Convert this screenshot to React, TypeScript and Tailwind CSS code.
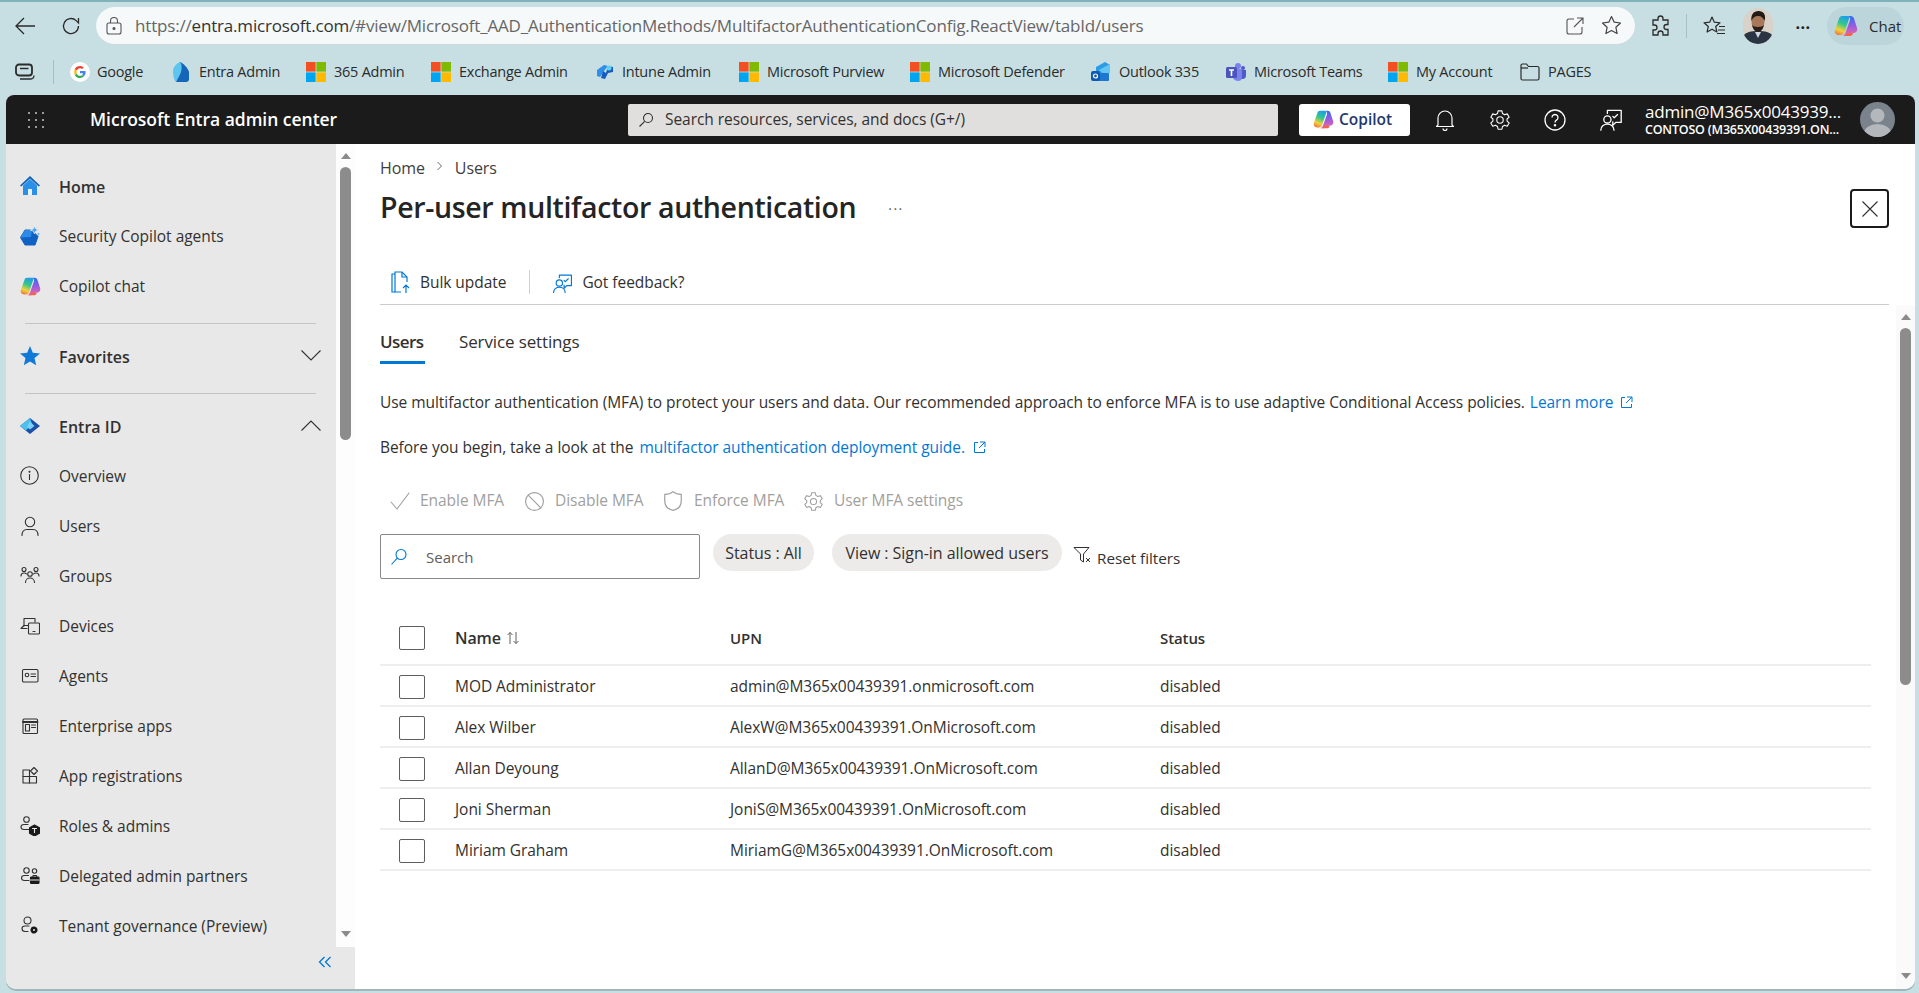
import React from "react";

const S = ({ size = 20, className = "", children, sw = 1.1 }: { size?: number; className?: string; children: React.ReactNode; sw?: number }) => (
  <svg width={size} height={size} viewBox="0 0 20 20" fill="none" stroke="currentColor" strokeWidth={sw} strokeLinecap="round" strokeLinejoin="round" className={"shrink-0 " + className}>
    {children}
  </svg>
);

const MsLogo = () => (
  <svg width="20" height="20" viewBox="0 0 20 20" className="shrink-0">
    <rect x="0" y="0" width="9.6" height="9.6" fill="#f25022" />
    <rect x="10.4" y="0" width="9.6" height="9.6" fill="#7fba00" />
    <rect x="0" y="10.4" width="9.6" height="9.6" fill="#00a4ef" />
    <rect x="10.4" y="10.4" width="9.6" height="9.6" fill="#ffb900" />
  </svg>
);

const CopilotIcon = ({ id, size = 20 }: { id: string; size?: number }) => (
  <svg width={size} height={size} viewBox="0 0 24 24" className="shrink-0">
    <defs>
      <linearGradient id={id + "b"} x1="0.6" y1="0" x2="0.3" y2="1">
        <stop offset="0" stopColor="#1d9fe8" />
        <stop offset="0.4" stopColor="#35c78a" />
        <stop offset="0.75" stopColor="#f2d23a" />
        <stop offset="1" stopColor="#f07a3a" />
      </linearGradient>
      <linearGradient id={id + "c"} x1="0.5" y1="0" x2="0.5" y2="1">
        <stop offset="0" stopColor="#2f6fe8" />
        <stop offset="0.5" stopColor="#9a5ae0" />
        <stop offset="1" stopColor="#ee6aa0" />
      </linearGradient>
    </defs>
    <path d="M8 2h5c1.600 0 2.500 1.200 2 2.800L10.500 18c-.7 2-2.200 3-4 3H4.500C1.800 21 .2 18.500 1 16L5 4.500C5.500 3 6.500 2 8 2z" fill={`url(#${id}b)`} />
    <path d="M13 2h3.500c1.800 0 3 1 3.500 2.500L23 14c.8 2.500-.8 5-3.500 5h-2l-2.500 1.500c-.8 1-1.700 1.500-3 1.500H8c1.700-.2 2.800-1.500 3.500-3.300L16 6c.5-2-.8-3.800-3-4z" fill={`url(#${id}c)`} />
    <path d="M10 22h6c1.500 0 2.800-1 3-3h-5.500l-1.500 1.500c-.6.8-1.200 1.300-2 1.500z" fill="#f0644b" />
  </svg>
);

const bookmarks: { w: string; icon: React.ReactNode; label: string; gap: string }[] = [
  {
    w: "w-[102px]",
    gap: "ml-[7px]",
    label: "Google",
    icon: (
      <svg width="20" height="20" viewBox="0 0 20 20" className="shrink-0">
        <circle cx="10" cy="10" r="10" fill="#fff" />
        <path d="M15.6 10.2c0-.5 0-.9-.1-1.2H10v2.3h3.1c-.1.7-.5 1.3-1.1 1.7l1.8 1.4c1.1-1 1.8-2.4 1.8-4.2z" fill="#4285f4" />
        <path d="M10 16c1.5 0 2.8-.5 3.8-1.4L12 13.2c-.5.3-1.2.6-2 .6-1.5 0-2.8-1-3.3-2.4l-1.9 1.5C5.8 14.8 7.7 16 10 16z" fill="#34a853" />
        <path d="M6.7 11.4c-.3-.9-.3-1.9 0-2.8L4.8 7.1c-.8 1.7-.8 4.1 0 5.8z" fill="#fbbc05" />
        <path d="M10 6.2c.9 0 1.6.3 2.2.9l1.6-1.6C12.8 4.6 11.500 4 10 4 7.700 4 5.800 5.200 4.800 7.100l1.900 1.500C7.200 7.200 8.500 6.200 10 6.200z" fill="#ea4335" />
      </svg>
    ),
  },
  {
    w: "w-[134px]",
    gap: "ml-[9px]",
    label: "Entra Admin",
    icon: (
      <svg width="18" height="20" viewBox="0 0 18 20" className="shrink-0">
        <path d="M8 0c3 1 8 6 9 10v7c0 2-1 3-3 3H4z" fill="#1565b8" />
        <path d="M1 9c0-4 4-8 7-9 2 2 2 6 1 10-1 3-3 6-5 10-2-2-3-6-3-11z" fill="#5ec5ee" />
      </svg>
    ),
  },
  { w: "w-[125px]", gap: "ml-[8px]", label: "365 Admin", icon: <MsLogo /> },
  { w: "w-[165px]", gap: "ml-[8px]", label: "Exchange Admin", icon: <MsLogo /> },
  {
    w: "w-[143px]",
    gap: "ml-[8px]",
    label: "Intune Admin",
    icon: (
      <svg width="18" height="18" viewBox="0 0 18 18" className="shrink-0">
        <path d="M1 7l7-5 4 1-4 5-4 6-3-1z" fill="#2f8fe8" />
        <path d="M7 8l3 2 2-7 5 1v5l-5 1-3 6-4-1z" fill="#155bc0" />
        <circle cx="13" cy="5" r="2.500" fill="#60d0f0" />
      </svg>
    ),
  },
  { w: "w-[171px]", gap: "ml-[8px]", label: "Microsoft Purview", icon: <MsLogo /> },
  { w: "w-[181px]", gap: "ml-[8px]", label: "Microsoft Defender", icon: <MsLogo /> },
  {
    w: "w-[135px]",
    gap: "ml-[8px]",
    label: "Outlook 335",
    icon: (
      <svg width="20" height="22" viewBox="0 0 20 22" className="shrink-0">
        <path d="M5 6l9-5 5 3-4 9H5z" fill="#2c9be6" />
        <path d="M8 9l11-6v9l-5 2z" fill="#64c5f2" />
        <rect x="4" y="12" width="14" height="8" rx="1" fill="#1d76cf" />
        <rect x="0" y="10" width="9" height="10" rx="2" fill="#0f5ab0" />
        <circle cx="4.500" cy="15" r="2" fill="none" stroke="#fff" strokeWidth="1.200" />
      </svg>
    ),
  },
  {
    w: "w-[162px]",
    gap: "ml-[8px]",
    label: "Microsoft Teams",
    icon: (
      <svg width="20" height="20" viewBox="0 0 20 20" className="shrink-0">
        <circle cx="12" cy="4" r="3" fill="#7b83eb" />
        <circle cx="17" cy="6" r="2" fill="#5059c9" />
        <path d="M14 8h6v6c0 2-2 3-3 3h-3z" fill="#5059c9" />
        <path d="M7 7h9v8c0 3-2 4-4 4s-4-1-5-3z" fill="#7b83eb" />
        <rect x="0" y="5" width="11" height="11" rx="1.500" fill="#4b53bc" />
        <path d="M3 8h5M5.500 8v6" stroke="#fff" strokeWidth="1.600" />
      </svg>
    ),
  },
  { w: "w-[132px]", gap: "ml-[8px]", label: "My Account", icon: <MsLogo /> },
  {
    w: "w-[80px]",
    gap: "ml-[8px]",
    label: "PAGES",
    icon: (
      <svg width="20" height="20" viewBox="0 0 20 20" fill="none" stroke="#2b2b2b" strokeWidth="1.200" className="shrink-0">
        <path d="M1 3.500C1 2.700 1.700 2 2.500 2h4l2 2.500h9c.8 0 1.500.7 1.500 1.500v10.500c0 .8-.7 1.500-1.500 1.500h-15C1.700 18 1 17.300 1 16.500z" />
        <path d="M1 6h7" />
      </svg>
    ),
  },
];

const navA = "text-[#323130]";

const Feedback = ({ className = "", size = 20 }: { className?: string; size?: number }) => (
  <S size={size} className={className}>
    <path d="M7 4.500V2h11.500v10h-4.500l-2.500 2.500v-3" />
    <circle cx="7" cy="9.500" r="3" />
    <path d="M1.500 18.500c0-3 2.500-5 5.500-5s5.500 2 5.500 5" />
    <path d="M11.500 7l1.200 1.200L15.500 5.500" />
  </S>
);

const navTop = [
  {
    label: "Home",
    bold: true,
    icon: (
      <svg width="20" height="20" viewBox="0 0 20 20" className="shrink-0">
        <path d="M3 9.500L10 3l7 6.500V19H3z" fill="#2a8fe6" />
        <path d="M0 9.500L10 0l10 9.500-1.300 1L10 2.500 1.300 10.500z" fill="#0f62b8" />
        <rect x="8" y="13" width="4" height="6" fill="#e8f2fb" />
      </svg>
    ),
  },
  {
    label: "Security Copilot agents",
    icon: (
      <svg width="20" height="20" viewBox="0 0 20 20" className="shrink-0">
        <path d="M5 4h7l6 6.500-3 8.500H5L.5 11.500z" fill="#0f62c4" strokeLinejoin="round" stroke="#0f62c4" />
        <path d="M5 4h7l-1 7-10.500.5z" fill="#2d8ae8" />
        <path d="M14.500 0l1.200 2.800 3 1.200-3 1.200-1.200 2.800-1.200-2.800-3-1.200 3-1.200z" fill="#4da3f0" stroke="#e8e8e8" strokeWidth="0.800" />
        <path d="M18.500 6.500l.4 1.100 1.100.4-1.100.4-.4 1.100-.4-1.100-1.100-.4 1.100-.4z" fill="#4da3f0" />
      </svg>
    ),
  },
  { label: "Copilot chat", icon: <CopilotIcon id="navc" size={21} /> },
];

const navBottom: { label: string; icon: React.ReactNode }[] = [
  {
    label: "Overview",
    icon: (
      <S className={navA}>
        <circle cx="9.500" cy="9.500" r="8.800" />
        <path d="M9.500 8.500v5" />
        <circle cx="9.500" cy="5.800" r="0.500" fill="currentColor" />
      </S>
    ),
  },
  {
    label: "Users",
    icon: (
      <S className={navA}>
        <circle cx="10" cy="6" r="4.700" />
        <path d="M2 19.500c0-4 2-6 5-6h6c3 0 5 2 5 6" />
      </S>
    ),
  },
  {
    label: "Groups",
    icon: (
      <S className={navA}>
        <circle cx="4" cy="3.500" r="2" />
        <circle cx="16" cy="3.500" r="2" />
        <circle cx="10" cy="8" r="2.300" />
        <path d="M1 10c0-2 1-3 3-3 1 0 2 .3 2.500 1M19 10c0-2-1-3-3-3-1 0-2 .3-2.500 1" />
        <path d="M5.500 16.500c0-2.500 2-4.500 4.500-4.500s4.500 2 4.500 4.500" />
      </S>
    ),
  },
  {
    label: "Devices",
    icon: (
      <S className={navA}>
        <path d="M4 10V2.500h11V6" />
        <path d="M7 12.500H1l3-3h4" />
        <rect x="8.500" y="7" width="11" height="11" rx="1" />
        <path d="M13 15.500h2" />
      </S>
    ),
  },
  {
    label: "Agents",
    icon: (
      <S className={navA}>
        <rect x="2.500" y="3.500" width="15.500" height="12.500" rx="1.200" />
        <circle cx="7" cy="9" r="1.800" />
        <path d="M11 8h4.500M11 10.500h4.500" />
      </S>
    ),
  },
  {
    label: "Enterprise apps",
    icon: (
      <S className={navA}>
        <rect x="3" y="3" width="14.500" height="14.500" rx="1" />
        <path d="M3 6h14.500" strokeWidth="1.800" />
        <rect x="5.500" y="8.500" width="4" height="6.500" />
        <path d="M11.500 9h4M11.500 11.500h4" />
      </S>
    ),
  },
  {
    label: "App registrations",
    icon: (
      <S className={navA}>
        <rect x="3" y="4" width="6.500" height="6.500" />
        <rect x="3" y="10.500" width="6.500" height="6.500" />
        <rect x="9.500" y="10.500" width="7" height="6.500" />
        <path d="M14 1.500l3.500 3.500-3.500 3.500-3.500-3.500z" />
      </S>
    ),
  },
  {
    label: "Roles & admins",
    icon: (
      <S className={navA}>
        <circle cx="6.500" cy="3.500" r="2.800" />
        <path d="M8 8.500H4c-2 0-3 1-3 2.500s1 2.500 3 2.500h5" />
        <path d="M14.500 9l5 2.700v5.600L14.500 20l-5-2.700v-5.600z" fill="#1a1a1a" stroke="#1a1a1a" />
        <path d="M12.500 12.500h4M14.500 12.500v4" stroke="#e8e8e8" />
      </S>
    ),
  },
  {
    label: "Delegated admin partners",
    icon: (
      <S className={navA}>
        <circle cx="6.500" cy="4.500" r="2.700" />
        <circle cx="14.500" cy="5" r="2.200" />
        <path d="M8.500 9.500H4.500c-2 0-3 1-3 2.500s1 2.500 3 2.500H9" />
        <rect x="10.500" y="11" width="8.500" height="6.500" rx="0.800" fill="#1a1a1a" stroke="#1a1a1a" />
        <path d="M13 11V9.500h3.500V11" />
        <path d="M10.500 14h8.500" stroke="#e8e8e8" />
      </S>
    ),
  },
  {
    label: "Tenant governance (Preview)",
    icon: (
      <S className={navA}>
        <circle cx="7.500" cy="4.500" r="3.500" />
        <path d="M9 10H5c-2 0-3 1-3 2.500S3 15.500 5 15.500h3" />
        <circle cx="14" cy="14" r="2.800" fill="#1a1a1a" stroke="#1a1a1a" strokeWidth="1.500" strokeDasharray="1.500 1" />
        <circle cx="14" cy="14" r="1" fill="#e8e8e8" stroke="none" />
      </S>
    ),
  },
];

const NavRow = ({ icon, label, bold, right }: { icon: React.ReactNode; label: string; bold?: boolean; right?: React.ReactNode }) => (
  <div className="h-[50px] flex items-center pl-[14px]">
    <div className="w-[39px] shrink-0 flex items-center -mt-[2px]">{icon}</div>
    <span className={bold ? "text-[16px] font-semibold text-[#323130] whitespace-nowrap" : "text-[15.500px] tracking-[-0.02px] text-[#323130] whitespace-nowrap"}>{label}</span>
    {right && <div className="ml-auto mr-[15px] -mt-[4px] text-[#323130]">{right}</div>}
  </div>
);

const Up = () => <div className="w-0 h-0 border-x-[5px] border-x-transparent border-b-[6px] border-b-[#8a8a8a]" />;
const Down = () => <div className="w-0 h-0 border-x-[5px] border-x-transparent border-t-[6px] border-t-[#8a8a8a]" />;

const Ext = ({ className = "" }: { className?: string }) => (
  <svg width="13" height="13" viewBox="0 0 13 13" fill="none" stroke="#0078d4" strokeWidth="1" className={"shrink-0 " + className}>
    <path d="M5 1.500H1.500v10h10V8" />
    <path d="M7 1h5v5M12 1L6 7" />
  </svg>
);

const users = [
  ["MOD Administrator", "admin@M365x00439391.onmicrosoft.com"],
  ["Alex Wilber", "AlexW@M365x00439391.OnMicrosoft.com"],
  ["Allan Deyoung", "AllanD@M365x00439391.OnMicrosoft.com"],
  ["Joni Sherman", "JoniS@M365x00439391.OnMicrosoft.com"],
  ["Miriam Graham", "MiriamG@M365x00439391.OnMicrosoft.com"],
];

const Box = () => <div className="w-[26px] h-[24px] border border-[#605e5c] rounded-[2px] bg-white" />;

export default function App() {
  return (
    <div className="w-[1919px] h-[993px] overflow-hidden bg-[#c7dfe3] flex flex-col font-['Open_Sans',sans-serif]">
      {/* browser bar */}
      <div className="h-[46px] shrink-0 border-t-2 border-[#7fb2bb] pt-[4px] flex items-center text-[#2b2b2b]">
        <svg width="22" height="22" viewBox="0 0 22 22" fill="none" stroke="#2b2b2b" strokeWidth="1.300" className="ml-[14px] shrink-0">
          <path d="M21 11H2M10 3l-8 8 8 8" />
        </svg>
        <svg width="20" height="20" viewBox="0 0 20 20" fill="none" stroke="#2b2b2b" strokeWidth="1.300" className="ml-[25px] shrink-0">
          <path d="M17.500 10a7.500 7.500 0 1 1-2.300-5.400L17.500 7V2" />
        </svg>
        <div className="ml-[15px] w-[1539px] h-[38px] rounded-full bg-[#f5f9fa] border-b border-[#cfd8da] flex items-center pl-[10px] pr-[13px]">
          <svg width="16" height="18" viewBox="0 0 16 18" fill="none" stroke="#555" strokeWidth="1.100" className="shrink-0">
            <rect x="1" y="6" width="14" height="11" rx="2" />
            <path d="M4.500 6V4a3.500 3.500 0 0 1 7 0v2" />
            <circle cx="8" cy="11.500" r="1" fill="#555" />
          </svg>
          <span className="ml-[13px] text-[17px] tracking-[-0.18px] text-[#666] whitespace-nowrap">
            https://<span className="text-[#333]">entra.microsoft.com</span>/#view/Microsoft_AAD_AuthenticationMethods/MultifactorAuthenticationConfig.ReactView/tabId/users
          </span>
          <div className="ml-auto flex items-center gap-[17px]">
            <svg width="18" height="18" viewBox="0 0 18 18" fill="none" stroke="#555" strokeWidth="1.100" className="shrink-0">
              <path d="M8 2H3a2 2 0 0 0-2 2v11a2 2 0 0 0 2 2h11a2 2 0 0 0 2-2v-5" />
              <path d="M11 1h6v6M17 1L8 10" />
            </svg>
            <svg width="21" height="21" viewBox="0 0 21 21" fill="none" stroke="#444" strokeWidth="1.200" className="shrink-0">
              <path d="M10.500 1.500l2.700 5.700 6.300.8-4.600 4.300 1.200 6.200-5.600-3-5.600 3 1.200-6.200L1.500 8l6.300-.8z" strokeLinejoin="round" />
            </svg>
          </div>
        </div>
        <svg width="20" height="22" viewBox="0 0 20 22" fill="none" stroke="#2b2b2b" strokeWidth="1.300" className="ml-[16px] shrink-0">
          <path d="M7 3.500a2.500 2.500 0 0 1 5 0V5h5v4.500h-1.500a2.500 2.500 0 0 0 0 5H17V20h-5v-1.500a2.500 2.500 0 0 0-5 0V20H2v-5h1.500a2.500 2.500 0 0 0 0-5H2V5h5z" />
        </svg>
        <div className="ml-[15px] w-px h-[24px] bg-[#a9bec2] shrink-0" />
        <svg width="24" height="22" viewBox="0 0 24 22" fill="none" stroke="#2b2b2b" strokeWidth="1.200" className="ml-[15px] shrink-0">
          <path d="M10 2l2.300 5.200 5.700.6-4.300 3.700 1.200 5.500L10 14.200 5.100 17l1.200-5.500L2 7.800l5.700-.6z" strokeLinejoin="round" />
          <path d="M17 11.500h6M16 15h7M15 18.500h8" />
        </svg>
        <svg width="30" height="36" viewBox="0 0 30 36" className="ml-[17px] shrink-0 rounded-full">
          <rect width="30" height="36" fill="#d9d2c8" />
          <path d="M0 36v-8c3-4 8-5 15-5s12 1 15 5v8z" fill="#2a3442" />
          <path d="M12 24l3 6 3-6z" fill="#cfd8e0" />
          <ellipse cx="15" cy="14" rx="6.500" ry="8" fill="#a9785a" />
          <path d="M8.500 13c-1-6 2-10 7-10s8 4 6 10c-1-3-3-5-6.500-5S9.500 10 8.500 13z" fill="#221a15" />
          <path d="M9 17c1 5 4 7 6 7s5-2 6-7c-1 1-3 2-6 2s-5-1-6-2z" fill="#2a1f18" />
        </svg>
        <span className="ml-[18px] w-[24px] text-center text-[16px] font-bold leading-none text-[#222] tracking-[0.5px] -mt-[6px]">...</span>
        <div className="ml-[12px] w-[77px] h-[38px] rounded-full bg-[#bcd5da] flex items-center pl-[7px]">
          <CopilotIcon id="chat" size={24} />
          <span className="ml-[11px] text-[15px] text-[#2b2b2b]">Chat</span>
        </div>
      </div>

      {/* bookmarks */}
      <div className="h-[49px] shrink-0 pt-[3px] flex items-center text-[#2b2b2b]">
        <svg width="20" height="18" viewBox="0 0 20 18" fill="none" stroke="#2b2b2b" className="ml-[15px] shrink-0">
          <rect x="1" y="1.500" width="16" height="11" rx="3" strokeWidth="1.800" />
          <path d="M5 5.500h8.500" strokeWidth="1.500" />
          <path d="M5 16h10c2 0 4-1 4-3.500" strokeWidth="1.300" />
        </svg>
        <div className="ml-[18px] w-px h-[24px] bg-[#a9bec2] shrink-0" />
        <div className="ml-[16px] flex items-center">
          {bookmarks.map((b) => (
            <div key={b.label} className={"flex items-center " + b.w}>
              {b.icon}
              <span className={"text-[14.500px] tracking-[-0.250px] whitespace-nowrap " + b.gap}>{b.label}</span>
            </div>
          ))}
        </div>
      </div>

      {/* portal */}
      <div className="ml-[6px] w-[1909px] h-[894px] shrink-0 rounded-t-[8px] rounded-b-[10px] overflow-hidden flex flex-col bg-white shadow-[0_2px_0_#9db7bd]">
        {/* header */}
        <div className="h-[49px] shrink-0 bg-[#1b1b1b] flex items-center text-white">
          <svg width="16" height="16" viewBox="0 0 16 16" fill="#fff" className="ml-[22px] shrink-0">
            {[1, 8, 15].flatMap((y) => [1, 8, 15].map((x) => <rect key={x + "-" + y} x={x - 0.75} y={y - 0.75} width="1.500" height="1.500" />))}
          </svg>
          <span className="ml-[46px] w-[250px] text-[17.500px] font-semibold whitespace-nowrap tracking-[-0.02px]">Microsoft Entra admin center</span>
          <div className="ml-[288px] w-[650px] h-[32px] bg-[#e1dfdd] rounded-[2px] flex items-center pl-[10px] text-[#323130]">
            <svg width="16" height="16" viewBox="0 0 16 16" fill="none" stroke="#323130" strokeWidth="1.100" className="shrink-0">
              <circle cx="10" cy="6" r="4.500" />
              <path d="M6.700 9.300L1.500 14.500" />
            </svg>
            <span className="ml-[11px] text-[15.500px] tracking-[-0.05px] whitespace-nowrap">Search resources, services, and docs (G+/)</span>
          </div>
          <div className="ml-[21px] w-[111px] h-[32px] bg-white rounded-[3px] flex items-center pl-[14px]">
            <CopilotIcon id="top" size={21} />
            <span className="ml-[5px] text-[15.500px] font-semibold text-[#1f3a6e]">Copilot</span>
          </div>
          <svg width="20" height="22" viewBox="0 0 20 22" fill="none" stroke="#fff" strokeWidth="1.200" className="ml-[25px] shrink-0">
            <path d="M3 16V9a7 7 0 0 1 14 0v7l1.500 1.500h-17z" strokeLinejoin="round" />
            <path d="M8 19.500a2 2 0 0 0 4 0" />
          </svg>
          <svg width="22" height="22" viewBox="0 0 24 24" fill="none" stroke="#fff" strokeWidth="1.200" className="ml-[34px] shrink-0">
            <path d="M9.900 2h4.200l.6 3 2.300 1.300 2.900-1 2.100 3.600-2.300 2v2.300l2.300 2-2.100 3.600-2.900-1-2.300 1.300-.6 3H9.900l-.6-3L7 17.800l-2.900 1L2 15.200l2.300-2v-2.300L2 8.900l2.100-3.600 2.900 1 2.300-1.300z" strokeLinejoin="round" />
            <circle cx="12" cy="12" r="3.500" />
          </svg>
          <svg width="22" height="22" viewBox="0 0 22 22" fill="none" stroke="#fff" strokeWidth="1.300" className="ml-[33px] shrink-0">
            <circle cx="11" cy="11" r="10" />
            <path d="M8 8.500a3 3 0 1 1 4.500 2.600c-1 .6-1.500 1.200-1.500 2.400" />
            <circle cx="11" cy="16.300" r="0.600" fill="#fff" />
          </svg>
          <Feedback size={24} className="ml-[33px] text-white" />
          <div className="ml-[22px] w-[202px] flex flex-col leading-none">
            <span className="text-[17px] tracking-[-0.2px] whitespace-nowrap leading-[20px]">admin@M365x0043939...</span>
            <span className="text-[12.500px] font-semibold tracking-[-0.2px] whitespace-nowrap leading-[15px]">CONTOSO (M365X00439391.ON...</span>
          </div>
          <div className="ml-[13px] w-[35px] h-[35px] rounded-full bg-[#7a828c] overflow-hidden shrink-0">
            <svg width="35" height="35" viewBox="0 0 35 35">
              <circle cx="17.500" cy="13.500" r="7" fill="#b4b8bd" />
              <ellipse cx="17.500" cy="31" rx="13.500" ry="9" fill="#b4b8bd" />
            </svg>
          </div>
        </div>

        {/* body */}
        <div className="flex-1 min-h-0 flex">
          {/* sidebar */}
          <div className="w-[349px] shrink-0 flex flex-col bg-[#e8e8e8]">
            <div className="flex-1 min-h-0 flex">
              <div className="w-[330px] overflow-hidden pt-[18px]">
                {navTop.map((n) => (
                  <NavRow key={n.label} icon={n.icon} label={n.label} bold={n.bold} />
                ))}
                <div className="ml-[19px] w-[291px] h-px bg-[#c4c4c4] mt-[11px] mb-[8px]" />
                <NavRow
                  bold
                  label="Favorites"
                  icon={
                    <svg width="20" height="20" viewBox="0 0 20 20" className="shrink-0">
                      <path d="M10 0l2.800 6.800 7.200.6-5.500 4.700 1.700 7.200L10 15.400l-6.200 3.900 1.700-7.200L0 7.400l7.200-.6z" fill="#0f78d8" />
                    </svg>
                  }
                  right={
                    <svg width="20" height="11" viewBox="0 0 20 11" fill="none" stroke="currentColor" strokeWidth="1.100"><path d="M.5.500l9.500 9.500 9.500-9.500" /></svg>
                  }
                />
                <div className="ml-[19px] w-[291px] h-px bg-[#c4c4c4] mt-[11px] mb-[8px]" />
                <NavRow
                  bold
                  label="Entra ID"
                  icon={
                    <svg width="20" height="20" viewBox="0 0 20 20" className="shrink-0">
                      <path d="M10 2l10 8-10 8L0 10z" fill="#1a4fa8" />
                      <path d="M10 2L0 10l6 4.500L12 8z" fill="#4cc1ef" />
                      <path d="M10 5.500l4.500 4.500-4.500 3.500L7 11z" fill="#7ad0f5" />
                    </svg>
                  }
                  right={
                    <svg width="20" height="11" viewBox="0 0 20 11" fill="none" stroke="currentColor" strokeWidth="1.100"><path d="M.5 10.500L10 1l9.500 9.500" /></svg>
                  }
                />
                {navBottom.map((n) => (
                  <NavRow key={n.label} icon={n.icon} label={n.label} />
                ))}
              </div>
              <div className="w-[19px] shrink-0 bg-[#fdfdfd] flex flex-col items-center pt-[9px] pb-[10px]">
                <Up />
                <div className="w-[11px] h-[273px] mt-[8px] rounded-[6px] bg-[#8c8c8c]" />
                <div className="flex-1" />
                <Down />
              </div>
            </div>
            <div className="h-[42px] shrink-0 flex justify-end pr-[23px] pt-[9px]">
              <svg width="14" height="12" viewBox="0 0 14 12" fill="none" stroke="#0078d4" strokeWidth="1.300">
                <path d="M6.500 1L1.500 6l5 5M12.500 1l-5 5 5 5" />
              </svg>
            </div>
          </div>

          {/* main */}
          <div className="flex-1 min-w-0 flex flex-col text-[#323130]">
            <div className="pl-[25px] pr-[26px] shrink-0">
              <div className="h-[24px] mt-[12px] flex items-center text-[16px] tracking-[-0.1px] text-[#3f3e3d]">
                <span>Home</span>
                <svg width="7" height="10" viewBox="0 0 7 10" fill="none" stroke="#555" strokeWidth="0.900" className="ml-[11px] mr-[12px] -mt-[4px]"><path d="M1.500 1l4 4-4 4" /></svg>
                <span>Users</span>
              </div>
              <div className="h-[44px] mt-[5px] flex items-start">
                <h1 className="h-[40px] flex items-center text-[28.500px] font-semibold tracking-[-0.350px] text-[#242424] whitespace-nowrap mt-[2px]">Per-user multifactor authentication</h1>
                <span className="ml-[32px] mt-[13px] text-[14px] leading-none text-[#605e5c] tracking-[1.5px]">...</span>
                <div className="ml-auto mt-[4px] w-[39px] h-[39px] border-2 border-[#1b1b1b] rounded-[4px] flex items-center justify-center">
                  <svg width="16" height="16" viewBox="0 0 16 16" fill="none" stroke="#323130" strokeWidth="1.100"><path d="M.5.500l15 15M15.500.500l-15 15" /></svg>
                </div>
              </div>
              <div className="mt-[35px] h-[41px] border-b border-[#cccccc] flex items-start pt-[6px]">
                <div className="h-[26px] flex items-center pl-[11px]">
                  <svg width="20" height="24" viewBox="0 0 20 24" fill="none" stroke="#0078d4" strokeWidth="1.200" className="shrink-0">
                    <path d="M4 3V1h7l5 5v5" />
                    <path d="M4 3H1v18h3" />
                    <path d="M4 3v18h6M11 1v5h5" />
                    <path d="M15 22v-8M12 17l3-3 3 3" />
                  </svg>
                  <span className="ml-[9px] text-[15.500px] tracking-[-0.05px]">Bulk update</span>
                </div>
                <div className="ml-[23px] w-px h-[24px] bg-[#d2d0ce]" />
                <div className="ml-[22px] h-[26px] flex items-center">
                  <Feedback className="text-[#0078d4]" size={21} />
                  <span className="ml-[9px] text-[15.500px] tracking-[-0.05px]">Got feedback?</span>
                </div>
              </div>
            </div>

            <div className="flex-1 min-h-0 flex">
              <div className="flex-1 min-w-0 pl-[25px]">
                <div className="h-[59px] flex items-end text-[17px]">
                  <div className="w-[45px] border-b-[3px] border-[#0078d4] pb-[7px] leading-[24px] font-semibold tracking-[-0.6px] whitespace-nowrap">Users</div>
                  <div className="ml-[34px] pb-[10px] leading-[24px] tracking-[-0.13px] whitespace-nowrap">Service settings</div>
                </div>
                <div className="mt-[26px] leading-[24px] text-[15.500px] tracking-[-0.05px] flex items-center whitespace-nowrap">
                  <span>Use multifactor authentication (MFA) to protect your users and data. Our recommended approach to enforce MFA is to use adaptive Conditional Access policies.</span>
                  <span className="ml-[5px] text-[#0078d4]">Learn more</span>
                  <Ext className="ml-[7px]" />
                </div>
                <div className="mt-[21px] leading-[24px] text-[15.500px] tracking-[-0.05px] flex items-center whitespace-nowrap">
                  <span>Before you begin, take a look at the</span>
                  <span className="ml-[6px] text-[#0078d4]">multifactor authentication deployment guide.</span>
                  <Ext className="ml-[8px]" />
                </div>
                <div className="mt-[27px] h-[30px] flex items-center text-[15.500px] tracking-[-0.05px] text-[#a19f9d] whitespace-nowrap">
                  <S size={20} className="ml-[10px]" sw={1.1}><path d="M1 11l6 7L19 2" /></S>
                  <span className="ml-[10px] w-[84px]">Enable MFA</span>
                  <S size={21} className="ml-[20px]"><circle cx="10" cy="10" r="8.500" /><path d="M4 4l12 12" /></S>
                  <span className="ml-[10px] w-[88px]">Disable MFA</span>
                  <S size={22} className="ml-[19px]"><path d="M10 1.500c2 1.800 4.500 2.500 7.500 2.500v6c0 4.500-3 7.500-7.500 8.500-4.500-1-7.500-4-7.500-8.500V4c3 0 5.500-.7 7.500-2.500z" /></S>
                  <span className="ml-[10px] w-[89px]">Enforce MFA</span>
                  <svg width="21" height="21" viewBox="0 0 24 24" fill="none" stroke="#a19f9d" strokeWidth="1.200" className="ml-[20px] shrink-0">
                    <path d="M9.900 2h4.200l.6 3 2.300 1.300 2.900-1 2.100 3.600-2.300 2v2.300l2.300 2-2.100 3.600-2.900-1-2.300 1.300-.6 3H9.900l-.6-3L7 17.800l-2.900 1L2 15.200l2.300-2v-2.300L2 8.900l2.100-3.600 2.900 1 2.300-1.300z" strokeLinejoin="round" />
                    <circle cx="12" cy="12" r="3.500" />
                  </svg>
                  <span className="ml-[10px]">User MFA settings</span>
                </div>
                <div className="mt-[18px] flex items-start">
                  <div className="w-[320px] h-[45px] border border-[#8a8886] rounded-[2px] flex items-center pl-[9px]">
                    <svg width="18" height="18" viewBox="0 0 18 18" fill="none" stroke="#0078d4" strokeWidth="1.100" className="shrink-0">
                      <circle cx="11" cy="6.500" r="5" />
                      <path d="M7.300 10.200L1.500 16.500" />
                    </svg>
                    <span className="ml-[18px] mt-[1px] text-[15px] text-[#605e5c]">Search</span>
                  </div>
                  <div className="ml-[13px] w-[101px] h-[37px] pt-[1px] rounded-full bg-[#edebe9] flex items-center justify-center text-[16px] tracking-[-0.05px] whitespace-nowrap">Status : All</div>
                  <div className="ml-[18px] w-[230px] h-[37px] pt-[1px] rounded-full bg-[#edebe9] flex items-center justify-center text-[16px] tracking-[-0.05px] whitespace-nowrap">View : Sign-in allowed users</div>
                  <div className="ml-[11px] h-[45px] flex items-center">
                    <svg width="18" height="18" viewBox="0 0 18 18" fill="none" stroke="#323130" strokeWidth="1" className="shrink-0 -mt-[4px]">
                      <path d="M1 1.500h15L10.500 8v8l-3-2V8z" />
                      <path d="M13 12l4 4M17 12l-4 4" />
                    </svg>
                    <span className="ml-[6px] mt-[3px] text-[15.300px] tracking-[-0.05px] whitespace-nowrap">Reset filters</span>
                  </div>
                </div>

                <div className="mt-[38px] w-[1491px]">
                  <div className="h-[49px] pb-[5px] border-b-2 border-[#efeeed] grid grid-cols-[75px_275px_430px_1fr] items-center text-[15px] tracking-[-0.1px] font-semibold">
                    <div className="pl-[19px]"><Box /></div>
                    <div className="flex items-center">
                      <span className="text-[16px]">Name</span>
                      <svg width="14" height="14" viewBox="0 0 14 14" fill="none" strokeWidth="1" className="ml-[5px]">
                        <path d="M4 13V1.500M1.500 4L4 1.500 6.500 4" stroke="#605e5c" />
                        <path d="M10 1v11.500M7.500 10l2.500 2.500 2.500-2.500" stroke="#605e5c" />
                      </svg>
                    </div>
                    <div>UPN</div>
                    <div>Status</div>
                  </div>
                  {users.map(([n, u]) => (
                    <div key={n} className="h-[41px] pt-[2px] border-b-2 border-[#efeeed] grid grid-cols-[75px_275px_430px_1fr] items-center text-[15.500px] tracking-[-0.05px]">
                      <div className="pl-[19px]"><Box /></div>
                      <div>{n}</div>
                      <div>{u}</div>
                      <div>disabled</div>
                    </div>
                  ))}
                </div>
              </div>
              <div className="w-[19px] shrink-0 bg-[#fafafa] flex flex-col items-center pt-[9px] pb-[10px]">
                <Up />
                <div className="w-[11px] h-[357px] mt-[8px] rounded-[6px] bg-[#8c8c8c]" />
                <div className="flex-1" />
                <Down />
              </div>
            </div>
          </div>
        </div>
      </div>
    </div>
  );
}
